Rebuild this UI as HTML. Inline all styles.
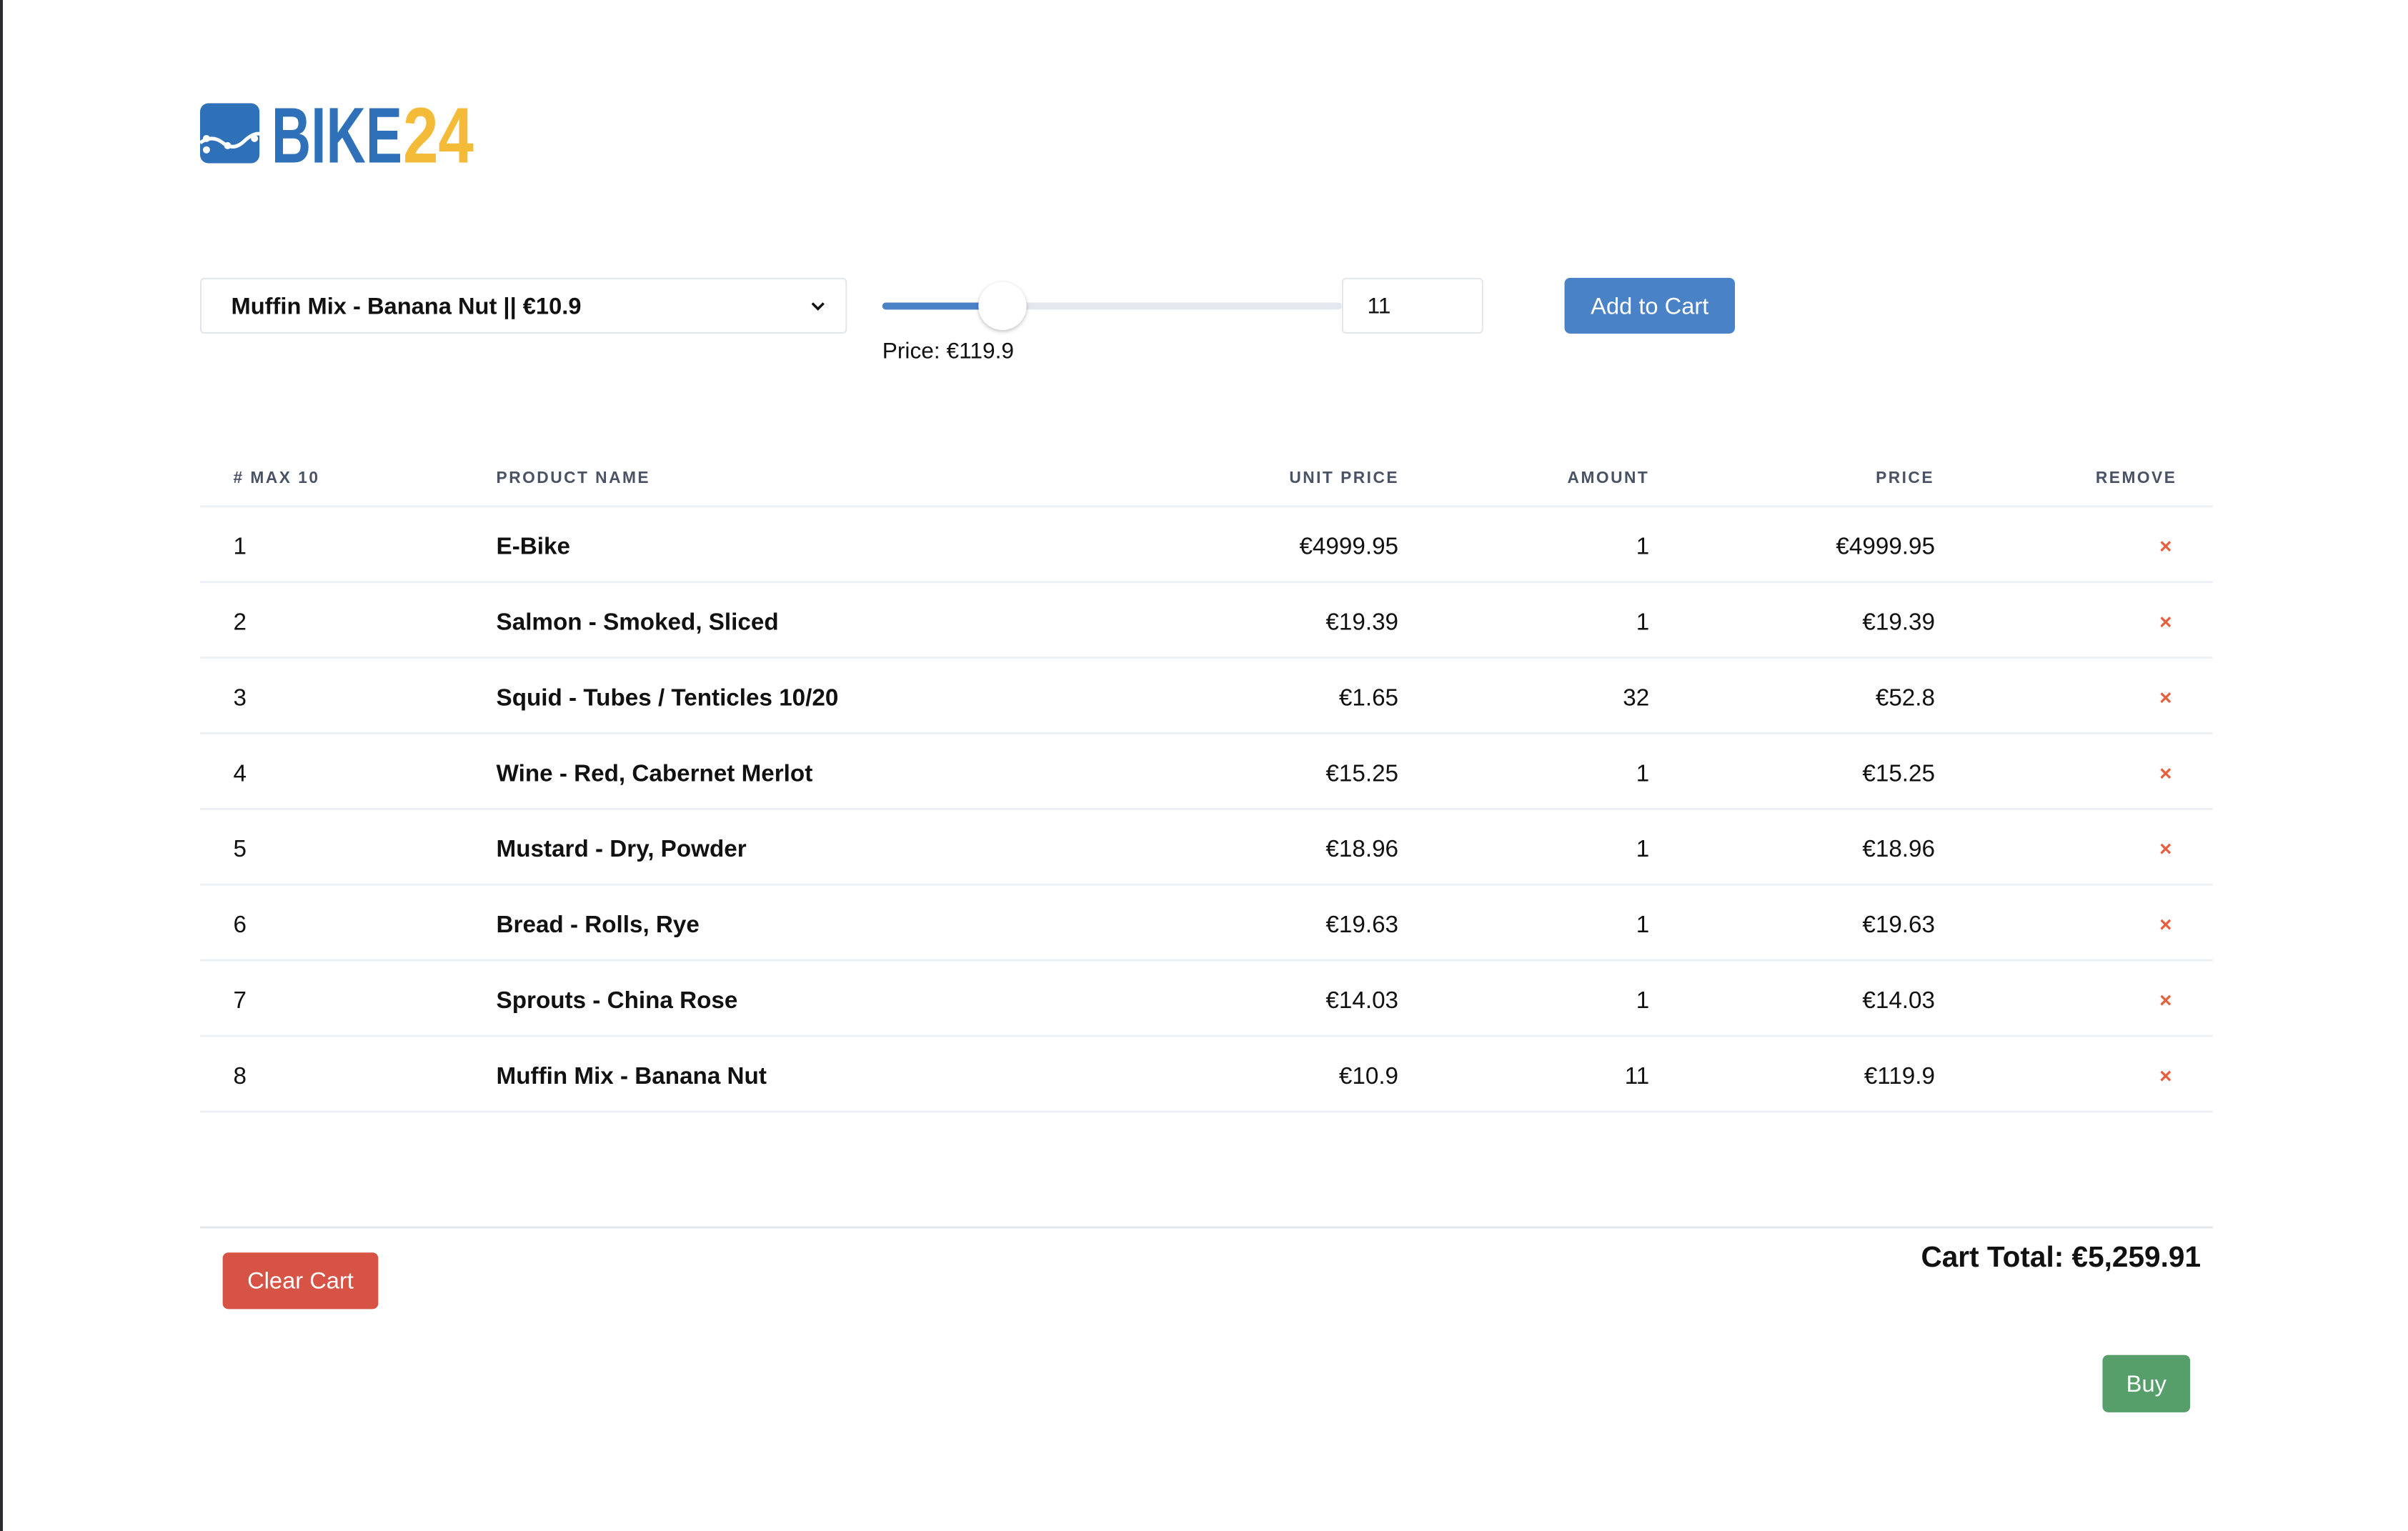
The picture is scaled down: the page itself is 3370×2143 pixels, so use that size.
<!DOCTYPE html>
<html><head><meta charset="utf-8">
<style>
*{box-sizing:border-box;margin:0;padding:0}
html,body{width:3370px;height:2143px;background:#fff;overflow:hidden;font-family:"Liberation Sans",sans-serif;color:#111}
.edge{position:absolute;left:0;top:0;width:4px;height:2143px;background:#2a2a30}
.wrap{position:absolute;left:0;top:0;width:3406px;height:2166px;transform:scale(0.9894);transform-origin:0 0}
.abs{position:absolute}
.select{left:283px;top:393px;width:915px;height:79px;border:2px solid #e2e6ec;border-radius:6px;font-size:33px;font-weight:700;padding-left:42px;line-height:75px}
.input{left:1898px;top:393px;width:200px;height:79px;border:2px solid #e2e6ec;border-radius:6px;font-size:32px;line-height:75px;padding-left:34px}
.btn{border-radius:8px;color:#fff;font-size:33px;text-align:center}
.row{position:absolute;left:283px;width:2847px;height:107px;border-bottom:3px solid #edf0f4;font-size:33.6px}
.row span{position:absolute;top:50%;transform:translateY(-50%);margin-top:4px}
.b{font-weight:700}
.hd{font-size:23px;font-weight:700;letter-spacing:2.5px;color:#4a5366;position:absolute;top:662px}
.x{color:#e4603f;font-weight:700;font-size:30px}
</style></head><body>
<div class="edge"></div>
<div class="wrap">
<svg class="abs" style="left:280px;top:140px" width="400" height="96" viewBox="0 0 400 96">
<rect x="3" y="6" width="84" height="85" rx="12" fill="#2f71b8"/>
<path d="M3 62 Q20 50 35 62 T65 60 T90 50" stroke="#fff" stroke-width="5" fill="none"/>
<circle cx="12" cy="56" r="5" fill="#fff"/><circle cx="12" cy="72" r="5" fill="#fff"/>
<circle cx="42" cy="66" r="5" fill="#fff"/><circle cx="80" cy="56" r="5" fill="#fff"/>
<text x="104" y="90" font-family="Liberation Sans" font-weight="700" font-size="112" fill="#2f71b8" textLength="185" lengthAdjust="spacingAndGlyphs">BIKE</text>
<text x="290" y="90" font-family="Liberation Sans" font-weight="700" font-size="112" fill="#f4bb38" textLength="100" lengthAdjust="spacingAndGlyphs">24</text>
</svg>
<div class="abs select">Muffin Mix - Banana Nut || €10.9
<svg class="abs" style="right:28px;top:30px" width="22" height="16" viewBox="0 0 22 16"><path d="M3 4 L11 12 L19 4" stroke="#111" stroke-width="3.5" fill="none"/></svg></div>
<div class="abs" style="left:1248px;top:428px;width:650px;height:10px;border-radius:5px;background:#e3e7ee"></div>
<div class="abs" style="left:1248px;top:428px;width:170px;height:10px;border-radius:5px;background:#4a82c8"></div>
<div class="abs" style="left:1384px;top:399px;width:68px;height:68px;border-radius:50%;background:#fff;box-shadow:0 2px 6px rgba(0,0,0,.25)"></div>
<div class="abs input">11</div>
<div class="abs btn" style="left:2213px;top:393px;width:241px;height:79px;background:#4a82c8;line-height:79px">Add to Cart</div>
<div class="abs" style="left:1248px;top:478px;font-size:32px">Price: €119.9</div>

<div class="hd" style="left:330px">#&nbsp;MAX 10</div>
<div class="hd" style="left:702px">PRODUCT NAME</div>
<div class="hd" style="right:1427px">UNIT PRICE</div>
<div class="hd" style="right:1073px">AMOUNT</div>
<div class="hd" style="right:670px">PRICE</div>
<div class="hd" style="right:327px">REMOVE</div>
<div class="abs" style="left:283px;top:715px;width:2847px;height:3px;background:#edf0f4"></div>

<div class="row" style="top:718px"><span style="left:47px">1</span><span class="b" style="left:419px">E-Bike</span><span style="right:1152px">€4999.95</span><span style="right:797px">1</span><span style="right:393px">€4999.95</span><span class="x" style="right:58px">×</span></div>
<div class="row" style="top:825px"><span style="left:47px">2</span><span class="b" style="left:419px">Salmon - Smoked, Sliced</span><span style="right:1152px">€19.39</span><span style="right:797px">1</span><span style="right:393px">€19.39</span><span class="x" style="right:58px">×</span></div>
<div class="row" style="top:932px"><span style="left:47px">3</span><span class="b" style="left:419px">Squid - Tubes / Tenticles 10/20</span><span style="right:1152px">€1.65</span><span style="right:797px">32</span><span style="right:393px">€52.8</span><span class="x" style="right:58px">×</span></div>
<div class="row" style="top:1039px"><span style="left:47px">4</span><span class="b" style="left:419px">Wine - Red, Cabernet Merlot</span><span style="right:1152px">€15.25</span><span style="right:797px">1</span><span style="right:393px">€15.25</span><span class="x" style="right:58px">×</span></div>
<div class="row" style="top:1146px"><span style="left:47px">5</span><span class="b" style="left:419px">Mustard - Dry, Powder</span><span style="right:1152px">€18.96</span><span style="right:797px">1</span><span style="right:393px">€18.96</span><span class="x" style="right:58px">×</span></div>
<div class="row" style="top:1253px"><span style="left:47px">6</span><span class="b" style="left:419px">Bread - Rolls, Rye</span><span style="right:1152px">€19.63</span><span style="right:797px">1</span><span style="right:393px">€19.63</span><span class="x" style="right:58px">×</span></div>
<div class="row" style="top:1360px"><span style="left:47px">7</span><span class="b" style="left:419px">Sprouts - China Rose</span><span style="right:1152px">€14.03</span><span style="right:797px">1</span><span style="right:393px">€14.03</span><span class="x" style="right:58px">×</span></div>
<div class="row" style="top:1467px"><span style="left:47px">8</span><span class="b" style="left:419px">Muffin Mix - Banana Nut</span><span style="right:1152px">€10.9</span><span style="right:797px">11</span><span style="right:393px">€119.9</span><span class="x" style="right:58px">×</span></div>

<div class="abs" style="left:283px;top:1735px;width:2847px;height:3px;background:#e4e8ec"></div>
<div class="abs btn" style="left:315px;top:1772px;width:220px;height:80px;background:#d65345;line-height:80px">Clear Cart</div>
<div class="abs b" style="right:293px;top:1755px;font-size:41px">Cart Total: €5,259.91</div>
<div class="abs btn" style="left:2974px;top:1917px;width:124px;height:81px;background:#569f6b;line-height:81px">Buy</div>
</div>
</body></html>
